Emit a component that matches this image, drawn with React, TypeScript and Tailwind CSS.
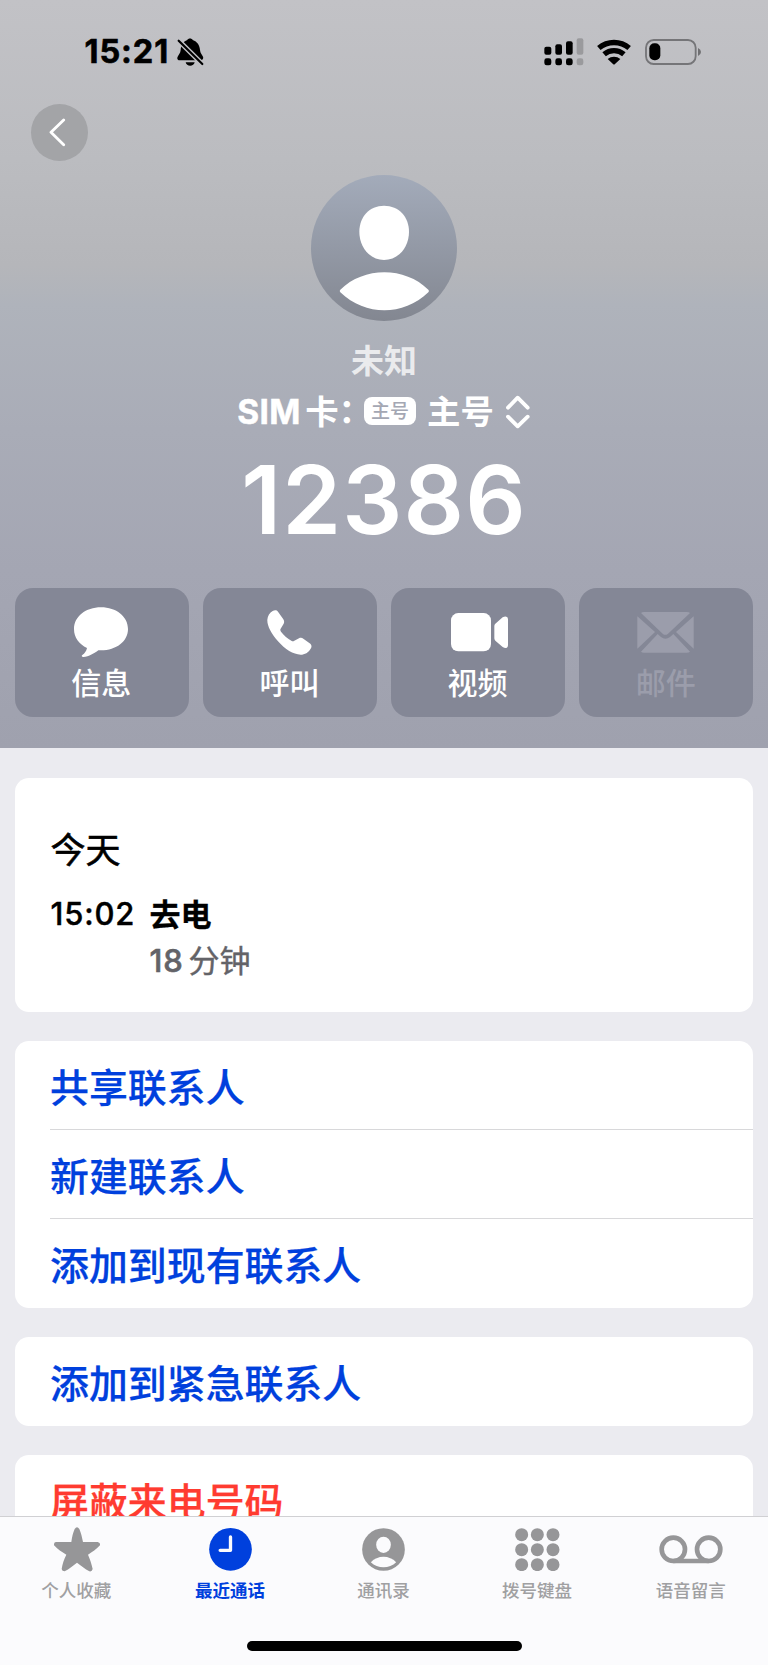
import React from "react";

function BellSlash() {
  return (
    <svg className="h-[28px] w-[27px]" viewBox="529 115 81 84">
      <mask id="bell-cut" maskUnits="userSpaceOnUse" x="520" y="105" width="100" height="100">
        <rect x="520" y="105" width="100" height="100" fill="#fff" />
        <path d="M525 114 L614 202" stroke="#000" strokeWidth="15" />
      </mask>
      <path
        mask="url(#bell-cut)"
        d="M560 121 C562 115 574 115 576 121 C590 126 597 137 598 151 C599 161 604 165 607 171 C609 177 606 182 600 182 L537 182 C531 182 528 177 531 171 C534 165 539 161 540 151 C541 137 547 126 560 121 Z M555 188 L582 188 C580 202 557 202 555 188 Z"
      />
      <path d="M534 123 L605 193" stroke="#000" strokeWidth="6.5" strokeLinecap="round" />
    </svg>
  );
}

function Signal() {
  return (
    <svg className="h-[28px] w-[40px]" viewBox="482 113 120 84">
      <g fill="#000">
        <rect x="483" y="139" width="21" height="24" rx="6" />
        <rect x="516" y="132" width="20" height="31" rx="6" />
        <rect x="548" y="123" width="20" height="40" rx="6" />
        <rect x="483" y="174" width="21" height="21" rx="7" />
        <rect x="516" y="174" width="20" height="21" rx="7" />
        <rect x="548" y="174" width="20" height="21" rx="7" />
      </g>
      <g fill="#9a9a9d">
        <rect x="580" y="114" width="20" height="49" rx="6" />
        <rect x="580" y="174" width="20" height="21" rx="7" />
      </g>
    </svg>
  );
}

function Wifi() {
  return (
    <svg className="h-[26px] w-[34px]" viewBox="641 115 102 78">
      <g fill="none" stroke="#000" strokeWidth="16">
        <path d="M646.5 142.2 A70.5 70.5 0 0 1 737.5 142.2" />
        <path d="M662.3 160.9 A46 46 0 0 1 721.7 160.9" />
      </g>
      <path d="M673 175 A29 29 0 0 1 711 175 L695 190 Q692 193 689 190 Z" fill="#000" />
    </svg>
  );
}

function Battery() {
  return (
    <svg className="h-[26px] w-[57px]" viewBox="782 116 171 78">
      <rect x="785" y="119" width="149" height="72" rx="23" fill="none" stroke="#757578" strokeWidth="5.5" />
      <rect x="795" y="129" width="33" height="51" rx="15" fill="#000" />
      <path d="M941 143 Q950 147 950 155 Q950 163 941 167 Z" fill="#6f6f72" />
    </svg>
  );
}

function MessageIcon() {
  return (
    <svg className="mr-[1px] h-[50px] w-[54px]" viewBox="222 113 162 150" fill="#fff">
      <path d="M303 114 C349 114 384 142 384 179 C384 216 349 243 303 243 L295 243 C283 252 267 262 250 263 C245 263 244 259 247 257 C254 252 259 246 261 236 C237 224 222 205 222 179 C222 142 257 114 303 114 Z" />
    </svg>
  );
}

function PhoneIcon() {
  return (
    <svg className="mr-[1px] h-[45px] w-[45px]" viewBox="800 121 135 135" fill="#fff">
      <path d="M817 124 C823 121 829 121 833 126 L849 149 C852 154 852 158 850 162 L841 177 C839 180 840 183 842 186 C851 198 862 207 873 213 C876 215 879 215 882 213 L896 206 C900 204 905 204 909 207 L930 222 C934 226 935 231 931 237 C925 248 913 255 901 255 C879 255 854 239 833 215 C813 192 800 169 801 150 C802 139 808 129 817 124 Z" />
    </svg>
  );
}

function VideoIcon() {
  return (
    <svg className="ml-[2px] h-[39px] w-[57px]" viewBox="201 130 171 117" fill="#fff">
      <rect x="201" y="130" width="120" height="115" rx="22" />
      <path d="M331 169 Q331 165 334 162 L356 143 Q363 139 367 141 Q372 142 372 149 L372 227 Q372 234 367 235 Q362 236 356 232 L334 213 Q331 210 331 206 Z" />
    </svg>
  );
}

function MailIcon() {
  return (
    <svg className="mr-[1px] h-[41px] w-[57px]" viewBox="761 126 171 123" fill="#9b9dab">
      <path d="M773 129 Q776 126 782 126 L910 126 Q917 126 920 129 L854 191 Q846 198 838 191 Z" />
      <path d="M762 139 L815 186 L762 236 Z" />
      <path d="M931 139 L931 236 L878 186 Z" />
      <path d="M823 192 L833 201 Q846 212 860 201 L870 192 L920 245 Q917 248 910 248 L782 248 Q776 248 773 245 Z" />
    </svg>
  );
}

function StarIcon() {
  return (
    <svg className="h-[45px] w-[46px]" viewBox="160 617 138 135" fill="#969698">
      <path d="M222 623 Q229 612 236 623 C241 634 244 648 247 662 L291 662 Q300 664 298 672 C287 684 275 692 262 700 C268 714 273 728 276 743 Q274 752 266 750 C253 743 241 733 229 724 C217 733 206 743 192 750 Q184 750 183 743 C185 728 190 714 197 700 C183 692 171 684 160 672 Q159 663 166 662 L212 662 C214 648 217 634 222 623 Z" />
    </svg>
  );
}

function ClockIcon() {
  return (
    <svg className="h-[43px] w-[43px]" viewBox="626.5 624 129 129">
      <circle cx="691" cy="688" r="64" fill="#0040dd" />
      <path d="M691 651 V691 H660" fill="none" stroke="#fbfbfd" strokeWidth="10" strokeLinecap="round" strokeLinejoin="round" />
    </svg>
  );
}

function ContactIcon() {
  return (
    <svg className="h-[43px] w-[43px]" viewBox="-64.5 -64.5 129 129">
      <circle r="64" fill="#969698" />
      <ellipse cy="-14" rx="22" ry="24.5" fill="#fbfbfd" />
      <path d="M-38 38 C-18 16 18 16 38 38 C18 58 -18 58 -38 38 Z" fill="#fbfbfd" />
    </svg>
  );
}

function KeypadIcon() {
  return (
    <svg className="h-[43px] w-[45px]" viewBox="392 624 135 129" fill="#969698">
      {[644, 689, 734].map((y) => [412, 459, 506].map((x) => <circle key={`${x}-${y}`} cx={x} cy={y} r="19.5" />))}
    </svg>
  );
}

function VoicemailIcon() {
  return (
    <svg className="h-[29px] w-[64px]" viewBox="825 645 192 87" fill="none" stroke="#969698" strokeWidth="14">
      <circle cx="868" cy="688" r="35" />
      <circle cx="974" cy="688" r="35" />
      <path d="M868 723 H974" />
    </svg>
  );
}

const actions = [
  { label: "信息", icon: <MessageIcon />, off: false },
  { label: "呼叫", icon: <PhoneIcon />, off: false },
  { label: "视频", icon: <VideoIcon />, off: false },
  { label: "邮件", icon: <MailIcon />, off: true },
];

const tabs = [
  { label: "个人收藏", icon: <StarIcon />, active: false },
  { label: "最近通话", icon: <ClockIcon />, active: true },
  { label: "通讯录", icon: <ContactIcon />, active: false },
  { label: "拨号键盘", icon: <KeypadIcon />, active: false },
  { label: "语音留言", icon: <VoicemailIcon />, active: false },
];

function Row({ children, danger = false, divider = false }: { children: string; danger?: boolean; divider?: boolean }) {
  return (
    <div
      className={`flex h-[89px] items-center text-[38.9px] leading-none font-medium [-webkit-text-stroke:0.25px] ${danger ? "pt-[3px] text-[#ff3b30]" : "text-[#0040dd]"} ${divider ? "border-b border-[#d8d8da] pt-[7px]" : "pt-[5px]"}`}
    >
      {children}
    </div>
  );
}

export default function App() {
  return (
    <div
      lang="zh-CN"
      className="flex h-[1665px] w-[768px] flex-col overflow-hidden bg-[#ebebf0] font-['Inter','Noto_Sans_CJK_SC',sans-serif] whitespace-nowrap"
    >
      <header className="flex h-[748px] shrink-0 flex-col bg-[linear-gradient(180deg,#c2c2c6_0px,#bbbcc0_160px,#b5b6ba_265px,#afb3bb_305px,#a9acb7_430px,#a4a6b3_570px,#9fa1ae_748px)]">
        <div className="flex h-[104px] items-center pl-[84.5px]">
          <span className="w-[92px] pt-[1px] text-[32.5px] leading-none font-bold tracking-[0.9px] [-webkit-text-stroke:0.6px]">15:21</span>
          <BellSlash />
          <div className="ml-[340.5px] flex items-center">
            <Signal />
            <div className="ml-[13px]">
              <Wifi />
            </div>
            <div className="ml-[13.5px]">
              <Battery />
            </div>
          </div>
        </div>

        <div className="flex h-[70.5px] pl-[30.5px]">
          <button className="flex size-[57px] items-center justify-center rounded-full bg-[#a3a4a7] pr-[3px]">
            <svg className="h-[29px] w-[17px]" viewBox="148 352 51 87">
              <path d="M192 358 L154 395 L192 432" fill="none" stroke="#fff" strokeWidth="8.5" strokeLinecap="round" strokeLinejoin="round" />
            </svg>
          </button>
        </div>

        <div className="flex flex-col items-center">
          <svg className="size-[146px]" viewBox="333 44 438 438">
            <defs>
              <linearGradient id="avatar" x1="0" y1="0" x2="0" y2="1">
                <stop offset="0" stopColor="#a3abba" />
                <stop offset="1" stopColor="#838791" />
              </linearGradient>
            </defs>
            <circle cx="552" cy="263" r="219" fill="url(#avatar)" />
            <path d="M552 136 C597 136 627 170 627 214 C627 262 594 299 552 299 C511 299 478 262 478 214 C478 170 508 136 552 136 Z" fill="#fff" />
            <path d="M421 388 C491 318 615 318 685 388 Q689 392 685 396 C609 468 497 468 421 396 Q417 392 421 388 Z" fill="#fff" />
          </svg>
          <div className="mt-[17px] h-[46px] text-[33px] leading-[46px] font-bold text-white/75">未知</div>
          <div className="mt-[5px] flex h-[46px] items-center text-[33.4px] leading-[46px] font-bold text-white">
            <span className="-ml-px w-[68px] tracking-[0.4px] [-webkit-text-stroke:0.5px]">SIM</span>
            <span>卡</span>
            <span className="-mr-[8px] pb-[2px]">：</span>
            <span className="mb-[2px] flex h-[28px] w-[52px] items-center justify-center rounded-[8px] bg-white pt-[1px] text-[19px] leading-none font-medium text-[#a4a7b3]">
              主号
            </span>
            <span className="ml-[11px]">主号</span>
            <svg className="ml-[12px] h-[34px] w-[24px]" viewBox="917 704 72 102">
              <path d="M923 742 L952 712 L982 742 M923 769 L952 798 L982 769" fill="none" stroke="#fff" strokeWidth="11.5" strokeLinecap="round" strokeLinejoin="round" />
            </svg>
          </div>
          <div className="mt-[15px] h-[100px] text-[94.5px] leading-[100px] font-semibold tracking-[1.1px] text-white">12386</div>
        </div>

        <div className="mt-auto mb-[31px] grid grid-cols-4 gap-[14px] px-[14.6px]">
          {actions.map((a) => (
            <div
              key={a.label}
              className={`flex h-[129px] flex-col items-center rounded-[18px] bg-[#848796] pt-[18px] ${a.off ? "text-[#9b9dab]" : "text-white"}`}
            >
              <div className="flex h-[52px] items-center">{a.icon}</div>
              <div className="mt-[7px] h-[36px] pr-[1px] text-[30px] leading-[36px] font-medium">{a.label}</div>
            </div>
          ))}
        </div>
      </header>

      <main className="flex min-h-0 flex-1 flex-col gap-[29px] overflow-hidden px-[14.6px] pt-[30px]">
        <section className="h-[234px] shrink-0 rounded-[14px] bg-white pt-[47px] pl-[36px]">
          <div className="h-[50px] text-[35px] leading-[50px] text-black [-webkit-text-stroke:0.6px]">今天</div>
          <div className="mt-[16px] flex text-[31px] leading-[46px] text-black">
            <span className="w-[99px] font-medium tracking-[0.8px] [-webkit-text-stroke:0.4px]">15:02</span>
            <div>
              <div className="pt-px font-bold [-webkit-text-stroke:0.3px]">去电</div>
              <div className="text-[#636368]">
                <span className="font-medium tracking-[0.8px] [-webkit-text-stroke:0.6px]">18</span>
                <span className="ml-[5px] [-webkit-text-stroke:0.4px]">分钟</span>
              </div>
            </div>
          </div>
        </section>
        <section className="h-[267px] shrink-0 rounded-[14px] bg-white pl-[35.5px]">
          <Row divider>共享联系人</Row>
          <Row divider>新建联系人</Row>
          <Row>添加到现有联系人</Row>
        </section>
        <section className="h-[89px] shrink-0 rounded-[14px] bg-white pl-[35.5px]">
          <Row>添加到紧急联系人</Row>
        </section>
        <section className="h-[89px] shrink-0 rounded-[14px] bg-white pl-[35.5px]">
          <Row danger>屏蔽来电号码</Row>
        </section>
      </main>

      <nav className="flex h-[149px] shrink-0 flex-col items-center border-t border-[#d0d0d3] bg-[#fbfbfd]">
        <div className="grid w-full grid-cols-5 pt-[8px]">
          {tabs.map((t) => (
            <div key={t.label} className="flex flex-col items-center">
              <div className="flex h-[49px] items-center">{t.icon}</div>
              <div
                className={`mt-[5px] h-[24px] pr-[1px] text-[17.5px] leading-[24px] ${t.active ? "font-bold text-[#0040dd]" : "font-medium text-[#a0a0a2]"}`}
              >
                {t.label}
              </div>
            </div>
          ))}
        </div>
        <div className="mt-[38px] h-[10px] w-[275px] rounded-full bg-black" />
      </nav>
    </div>
  );
}
